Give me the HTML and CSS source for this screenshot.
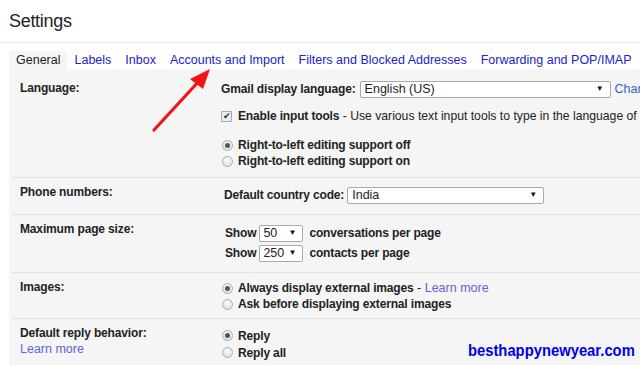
FILE: index.html
```html
<!DOCTYPE html>
<html lang="en">
<head>
    <meta charset="UTF-8">
    <meta name="viewport" content="width=device-width, initial-scale=1.0">
    <title>Settings</title>
    <link rel="stylesheet" href="styles.css">
</head>
<body>
    <div class="header">
        <h1>Settings</h1>
    </div>

    <div class="tabs">
        <span class="tab active">General</span>
        <a class="tab" href="#">Labels</a>
        <a class="tab" href="#">Inbox</a>
        <a class="tab" href="#">Accounts and Import</a>
        <a class="tab" href="#">Filters and Blocked Addresses</a>
        <a class="tab" href="#">Forwarding and POP/IMAP</a>
    </div>

    <div class="panel">
        <!-- Language -->
        <div class="row row-lang">
            <div class="label">Language:</div>
            <div class="value">
                <div class="line">
                    <b>Gmail display language:</b>
                    <span class="select select-lang">English (US)<i>&#9660;</i></span>
                    <a class="link" href="#">Change language settings</a>
                </div>
                <div class="line line-check">
                    <span class="checkbox">&#10004;</span>
                    <span><b>Enable input tools</b><span class="desc"> - Use various text input tools to type in the language of your choice</span></span>
                </div>
                <div class="radios">
                    <div class="opt"><span class="radio checked"></span><b>Right-to-left editing support off</b></div>
                    <div class="opt"><span class="radio"></span><b>Right-to-left editing support on</b></div>
                </div>
            </div>
        </div>

        <!-- Phone numbers -->
        <div class="row">
            <div class="label">Phone numbers:</div>
            <div class="value value-phone">
                <div class="line">
                    <b>Default country code:</b>
                    <span class="select select-country">India<i>&#9660;</i></span>
                </div>
            </div>
        </div>

        <!-- Page size -->
        <div class="row">
            <div class="label">Maximum page size:</div>
            <div class="value value-size">
                <div class="line">
                    <b>Show</b>
                    <span class="select select-num">50<i>&#9660;</i></span>
                    <b>conversations per page</b>
                </div>
                <div class="line">
                    <b>Show</b>
                    <span class="select select-num">250<i>&#9660;</i></span>
                    <b>contacts per page</b>
                </div>
            </div>
        </div>

        <!-- Images -->
        <div class="row">
            <div class="label">Images:</div>
            <div class="value value-images">
                <div class="opt"><span class="radio checked"></span><span><b>Always display external images</b> - <a class="learn" href="#">Learn more</a></span></div>
                <div class="opt"><span class="radio"></span><b>Ask before displaying external images</b></div>
            </div>
        </div>

        <!-- Reply -->
        <div class="row">
            <div class="label">
                Default reply behavior:
                <a class="learn" href="#">Learn more</a>
            </div>
            <div class="value value-reply">
                <div class="opt"><span class="radio checked"></span><b>Reply</b></div>
                <div class="opt"><span class="radio"></span><b>Reply all</b></div>
            </div>
        </div>
    </div>

    <!-- red arrow pointing at the tab -->
    <svg class="arrow" width="640" height="365" viewBox="0 0 640 365">
        <line x1="154" y1="130" x2="200" y2="80" stroke="#f41414" stroke-width="3.2" stroke-linecap="round"/>
        <polygon points="210,69 190,79 203,89" fill="#f41414"/>
    </svg>

    <div class="watermark">besthappynewyear.com</div>
</body>
</html>
```

FILE: styles.css
```css
body {
    font-family: 'Liberation Sans', Arial, sans-serif;
    font-size: 12.5px;
    line-height: 16px;
    color: #222;
    background: #fff;
    margin: 0;
    width: 640px;
    height: 365px;
    overflow: hidden;
    position: relative;
    white-space: nowrap;
}
a {
    text-decoration: none;
}
b {
    font-size: 12px;
    letter-spacing: -0.15px;
}

.header {
    padding: 9px 0 9px 9px;
    border-bottom: 1px solid #e5e5e5;
}
.header h1 {
    margin: 0;
    font-size: 18px;
    line-height: 24px;
    letter-spacing: -0.3px;
    font-weight: normal;
    color: #222;
}

.tabs {
    display: flex;
    margin: 8px 0 0 9px;
    height: 18px;
}
.tab {
    padding: 0 7px;
    line-height: 18px;
    color: #2222cc;
}
.tab.active {
    color: #222;
    background: #f5f5f5;
}

.panel {
    background: #f5f5f5;
    margin-left: 9px;
    height: 300px;
}

.row {
    display: grid;
    grid-template-columns: 201px 1fr;
    margin-left: 3px;
    padding-left: 8px;
    border-top: 1px solid #e2e2e2;
}
.row.row-lang {
    border-top: none;
}
.label {
    font-weight: bold;
    font-size: 12px;
    letter-spacing: -0.15px;
    padding-top: 6px;
}
.row-lang .label {
    padding-top: 11px;
}
.label .learn {
    display: block;
    font-weight: normal;
    font-size: 12.5px;
    letter-spacing: 0;
}

.value {
    padding: 7px 0 9px;
}
.row-lang .value {
    padding: 10px 0 8px;
}
.value-size {
    padding-top: 8px;
}
.value-images {
    padding: 7px 0 6px 1px;
}
.value-reply {
    padding: 8px 0 0 1px;
}
.value-reply .opt {
    height: 17px;
}

.line {
    display: flex;
    align-items: center;
    height: 20px;
}
.value-phone .line {
    padding-left: 3px;
}
.value-size .line {
    padding-left: 4px;
}
.line-check {
    margin-top: 7px;
}
.desc {
    font-size: 12.2px;
}

.select {
    display: inline-flex;
    align-items: center;
    justify-content: space-between;
    box-sizing: border-box;
    height: 17px;
    padding: 0 6px 0 4px;
    background: #fff;
    border: 1px solid #a9a9a9;
    border-radius: 2px;
    font-weight: normal;
    color: #222;
}
.select i {
    font-style: normal;
    font-size: 8px;
    color: #111;
}
.select-lang {
    width: 251px;
    margin: 0 4px;
}
.select-country {
    width: 197px;
    margin-left: 3px;
}
.select-num {
    width: 44px;
    margin: 0 6px 0 3px;
    padding-left: 3px;
}

.link {
    color: #3b5fcf;
}
.learn {
    color: #6464d4;
}

.checkbox {
    display: inline-flex;
    align-items: center;
    justify-content: center;
    box-sizing: border-box;
    width: 11px;
    height: 11px;
    margin-right: 6px;
    border: 1px solid #a8a8a8;
    border-radius: 1px;
    background: #ececec;
    font-size: 9px;
    line-height: 9px;
    color: #333;
}

.radios {
    margin-top: 11px;
    padding-left: 1px;
}
.opt {
    display: flex;
    align-items: center;
    height: 16px;
}
.radio {
    display: inline-flex;
    align-items: center;
    justify-content: center;
    box-sizing: border-box;
    width: 11px;
    height: 11px;
    margin-right: 5px;
    border: 1px solid #adadad;
    border-radius: 50%;
    background: radial-gradient(circle at 50% 35%, #fbfbfb, #dadada);
}
.radio.checked::after {
    content: "";
    width: 5px;
    height: 5px;
    border-radius: 50%;
    background: #555;
}

.arrow {
    position: absolute;
    left: 0;
    top: 0;
    pointer-events: none;
}

.watermark {
    position: absolute;
    right: 5px;
    top: 340px;
    font-family: 'Liberation Sans', Arial, sans-serif;
    font-size: 17px;
    line-height: 22px;
    font-weight: bold;
    letter-spacing: 0;
    color: #0000f0;
    transform: scaleX(0.87);
    transform-origin: right center;
}
```
